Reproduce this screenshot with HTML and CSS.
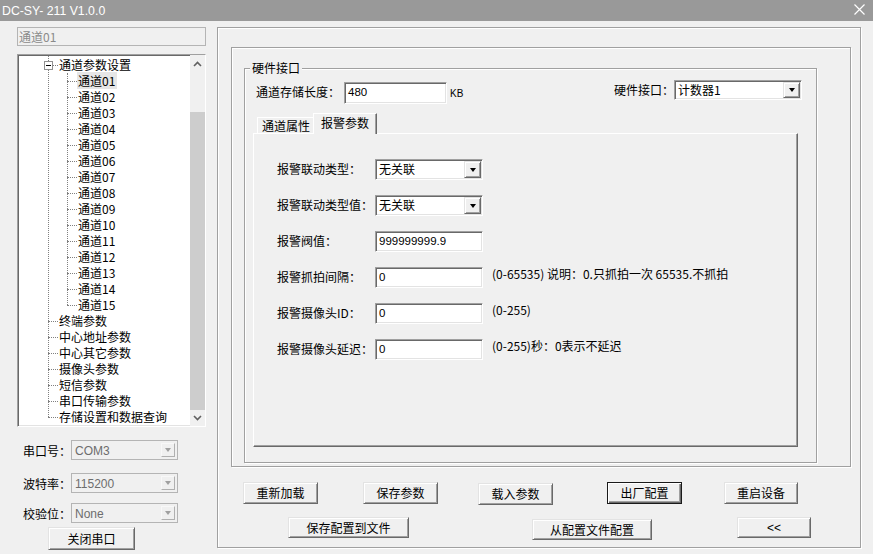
FILE: index.html
```html
<!DOCTYPE html>
<html lang="zh-CN">
<head>
<meta charset="utf-8">
<title>DC-SY- 211 V1.0.0</title>
<link rel="stylesheet" href="styles.css">
</head>
<body>
<div class="titlebar">
  <span class="title">DC-SY- 211 V1.0.0</span>
  <svg class="close" width="11" height="11" viewBox="0 0 11 11"><path d="M0.5 0.5L10.5 10.5M10.5 0.5L0.5 10.5" stroke="#fff" stroke-width="1.2" fill="none"/></svg>
</div>
<div class="main">
  <div class="left">
    <div class="chan">通道01</div>
    <div class="tree">
      <div class="tree-body">
        <ul class="l1">
          <li>
            <div class="row r1"><span class="exp"></span>通道参数设置</div>
            <ul class="l2">
              <li class="row r2"><span class="sel">通道01</span></li>
              <li class="row r2">通道02</li>
              <li class="row r2">通道03</li>
              <li class="row r2">通道04</li>
              <li class="row r2">通道05</li>
              <li class="row r2">通道06</li>
              <li class="row r2">通道07</li>
              <li class="row r2">通道08</li>
              <li class="row r2">通道09</li>
              <li class="row r2">通道10</li>
              <li class="row r2">通道11</li>
              <li class="row r2">通道12</li>
              <li class="row r2">通道13</li>
              <li class="row r2">通道14</li>
              <li class="row r2">通道15</li>
            </ul>
          </li>
          <li class="row r1">终端参数</li>
          <li class="row r1">中心地址参数</li>
          <li class="row r1">中心其它参数</li>
          <li class="row r1">摄像头参数</li>
          <li class="row r1">短信参数</li>
          <li class="row r1">串口传输参数</li>
          <li class="row r1">存储设置和数据查询</li>
        </ul>
      </div>
      <div class="vscroll">
        <div class="sb-btn up"><svg width="9" height="6" viewBox="0 0 9 6"><path d="M1 5L4.5 1.5L8 5" fill="none" stroke="#606060" stroke-width="1.6"/></svg></div>
        <div class="sb-track"><div class="sb-thumb"></div></div>
        <div class="sb-btn down"><svg width="9" height="6" viewBox="0 0 9 6"><path d="M1 1L4.5 4.5L8 1" fill="none" stroke="#606060" stroke-width="1.6"/></svg></div>
      </div>
    </div>
    <div class="serial">
      <div class="srow"><span class="slbl">串口号：</span><div class="combo dis"><span class="val">COM3</span><span class="dd"></span></div></div>
      <div class="srow"><span class="slbl">波特率：</span><div class="combo dis"><span class="val">115200</span><span class="dd"></span></div></div>
      <div class="srow"><span class="slbl">校验位：</span><div class="combo dis"><span class="val">None</span><span class="dd"></span></div></div>
      <button class="btn closeport">关闭串口</button>
    </div>
  </div>

  <div class="frameA">
    <div class="frameB">
      <div class="group">
        <span class="group-title">硬件接口</span>
        <div class="hwrow">
          <span class="hwlbl">通道存储长度：</span>
          <div class="tb len">480</div>
          <span class="kb">KB</span>
          <span class="hwlbl2">硬件接口：</span>
          <div class="combo hw"><span class="val">计数器1</span><span class="dd"></span></div>
        </div>
        <div class="tabs">
          <div class="tab">通道属性</div>
          <div class="tab active">报警参数</div>
        </div>
        <div class="tabpage">
          <div class="frow"><span class="lbl">报警联动类型：</span><div class="combo fc"><span class="val">无关联</span><span class="dd"></span></div></div>
          <div class="frow"><span class="lbl">报警联动类型值：</span><div class="combo fc"><span class="val">无关联</span><span class="dd"></span></div></div>
          <div class="frow"><span class="lbl">报警阀值：</span><div class="tb fc">999999999.9</div></div>
          <div class="frow"><span class="lbl">报警抓拍间隔：</span><div class="tb fc">0</div><span class="hint">(0-65535) 说明：0.只抓拍一次 65535.不抓拍</span></div>
          <div class="frow"><span class="lbl">报警摄像头ID：</span><div class="tb fc">0</div><span class="hint">(0-255)</span></div>
          <div class="frow"><span class="lbl">报警摄像头延迟：</span><div class="tb fc">0</div><span class="hint">(0-255)秒：0表示不延迟</span></div>
        </div>
      </div>
    </div>
    <div class="brow1">
      <button class="btn">重新加载</button>
      <button class="btn">保存参数</button>
      <button class="btn">载入参数</button>
      <button class="btn def">出厂配置</button>
      <button class="btn">重启设备</button>
    </div>
    <div class="brow2">
      <button class="btn">保存配置到文件</button>
      <button class="btn">从配置文件配置</button>
      <button class="btn">&lt;&lt;</button>
    </div>
  </div>
</div>
</body>
</html>
```
FILE: styles.css
```css
* { box-sizing: border-box; }
html, body { margin: 0; padding: 0; }
body {
  width: 873px;
  height: 554px;
  overflow: hidden;
  background: #f0f0f0;
  font-family: "Noto Sans CJK SC", "Noto Sans", sans-serif;
  font-size: 12px;
  color: #000;
}

/* title bar */
.titlebar {
  height: 21px;
  background: #999999;
  display: flex;
  align-items: center;
  justify-content: space-between;
  padding: 0 8px 0 2px;
  color: #fff;
}
.title {
  font-family: "Liberation Sans", Arial, sans-serif;
  font-size: 12.3px;
}
.close { display: block; margin-top: -3px; }

.main { display: flex; height: 533px; }

/* left column */
.left { width: 217px; flex: none; padding-left: 17px; }
.chan {
  margin-top: 6px;
  width: 189px;
  height: 19px;
  border: 1px solid #b4b4b4;
  background: #f0f0f0;
  color: #8a8a8a;
  line-height: 17px;
  padding-left: 1px;
}
.tree {
  margin-top: 8px;
  width: 189px;
  height: 373px;
  display: flex;
  background: #fff;
  border: 1px solid;
  border-color: #a0a0a0 #fff #fff #a0a0a0;
  box-shadow: inset 1px 1px #696969, inset -1px -1px #e3e3e3;
}
.tree-body { flex: 1; padding-top: 2px; position: relative; overflow: hidden; }
.l1, .l2 { list-style: none; margin: 0; padding: 0; position: relative; }
.l1::before {
  content: "";
  position: absolute;
  left: 30px;
  top: -3px;
  bottom: 8px;
  border-left: 1px dotted #808080;
}
.l2::before {
  content: "";
  position: absolute;
  left: 49px;
  top: 0;
  bottom: 8px;
  border-left: 1px dotted #808080;
}
.row {
  height: 16px;
  line-height: 16px;
  position: relative;
  white-space: nowrap;
}
.row::before {
  content: "";
  position: absolute;
  top: 8px;
  width: 10px;
  border-top: 1px dotted #808080;
}
.r1 { padding-left: 41px; }
.r1::before { left: 30px; }
.r2 { padding-left: 60px; }
.r2::before { left: 49px; }
.exp {
  position: absolute;
  left: 26px;
  top: 4px;
  width: 9px;
  height: 9px;
  border: 1px solid #919191;
  background: #fff;
  z-index: 1;
}
.exp::after {
  content: "";
  position: absolute;
  left: 1px;
  top: 3px;
  width: 5px;
  height: 1px;
  background: #000;
}
.sel { background: #e6e6e6; margin-left: -1px; padding: 0 2px 0 1px; }

.vscroll {
  width: 15px;
  flex: none;
  display: flex;
  flex-direction: column;
  background: #f0f0f0;
}
.sb-btn { height: 17px; display: flex; align-items: center; justify-content: center; }
.sb-btn svg { display: block; }
.sb-btn.down { height: 16px; }
.sb-track { flex: 1; padding-top: 40px; display: flex; flex-direction: column; }
.sb-thumb { flex: 1; background: #cdcdcd; }

.serial { padding-left: 6px; }
.srow { display: flex; align-items: center; height: 20px; margin-top: 13px; }
.srow:nth-child(3) { margin-top: 10px; }
.slbl { width: 48px; }

/* combos */
.combo {
  display: flex;
  height: 20px;
  background: #fff;
  border: 1px solid;
  border-color: #a0a0a0 #fff #fff #a0a0a0;
  box-shadow: inset 1px 1px #696969, inset -1px -1px #e3e3e3;
  padding: 1px 1px 1px 3px;
}
.combo .val { flex: 1; line-height: 16px; white-space: nowrap; }
.dd {
  width: 17px;
  flex: none;
  background: #f0f0f0;
  border: 1px solid;
  border-color: #e3e3e3 #696969 #696969 #e3e3e3;
  box-shadow: inset 1px 1px #fff, inset -1px -1px #a0a0a0;
  display: flex;
  align-items: center;
  justify-content: center;
}
.dd::after {
  content: "";
  border-left: 3.5px solid transparent;
  border-right: 3.5px solid transparent;
  border-top: 4px solid #000;
}
.combo.dis {
  width: 107px;
  background: #f0f0f0;
  color: #6d6d6d;
  border: 1px solid #b4b4b4;
  box-shadow: none;
  padding: 2px 2px 2px 3px;
  font-family: "Liberation Sans", Arial, sans-serif;
}
.combo.dis .dd { width: 14px; border-color: #f8f8f8 #b0b0b0 #b0b0b0 #f8f8f8; box-shadow: none; }
.combo.dis .dd::after { border-top-color: #a0a0a0; }

/* text boxes */
.tb {
  background: #fff;
  border: 1px solid;
  border-color: #a0a0a0 #fff #fff #a0a0a0;
  box-shadow: inset 1px 1px #696969, inset -1px -1px #e3e3e3;
  padding: 1px 0 0 3px;
  line-height: 14px;
  font-family: "Liberation Sans", Arial, sans-serif;
  font-size: 11.5px;
  white-space: nowrap;
}

/* buttons */
.btn {
  font-family: "Noto Sans CJK SC", "Noto Sans", sans-serif;
  font-size: 12px;
  color: #000;
  background: #f0f0f0;
  border: 1px solid;
  border-color: #e3e3e3 #696969 #696969 #e3e3e3;
  box-shadow: inset 1px 1px #fff, inset -1px -1px #a0a0a0;
  padding: 0;
  line-height: 18px;
}
.btn.def {
  border: 1px solid #1a1a1a;
  box-shadow: inset 1px 1px #fff, inset -1px -1px #696969, inset -2px -2px #a0a0a0;
}
.closeport { margin: 4px 0 0 25px; width: 87px; height: 23px; }

/* right frames */
.frameA {
  margin-top: 6px;
  width: 644px;
  height: 521px;
  flex: none;
  border: 1px solid #a0a0a0;
  box-shadow: inset 1px 1px #fff, 1px 1px #fff;
}
.frameB {
  margin: 19px 0 0 13px;
  width: 620px;
  height: 420px;
  border: 1px solid #a0a0a0;
  box-shadow: inset 1px 1px #fff, 1px 1px #fff;
}
.group {
  position: relative;
  margin: 20px 0 0 12px;
  width: 573px;
  height: 395px;
  border: 1px solid #a0a0a0;
  box-shadow: inset 1px 1px #fff, 1px 1px #fff;
}
.group-title {
  position: absolute;
  left: 5px;
  top: -9px;
  padding: 0 2px;
  background: #f0f0f0;
  line-height: 16px;
}
.hwrow {
  display: flex;
  align-items: flex-start;
  height: 24px;
  margin-top: 11px;
  padding: 0 14px 0 11px;
}
.hwlbl { width: 88px; line-height: 22px; margin-top: 1px; }
.tb.len { width: 103px; height: 22px; margin-top: 2px; padding-top: 2px; }
.kb {
  font-family: "Liberation Sans", Arial, sans-serif;
  font-size: 10px;
  margin: 3px 0 0 3px;
  line-height: 22px;
}
.hwlbl2 { margin-left: auto; margin-right: 0; line-height: 20px; }
.combo.hw { width: 128px; }

/* tabs */
.tabs {
  display: flex;
  align-items: flex-end;
  height: 20px;
  margin: 9px 0 0 12px;
  position: relative;
  z-index: 1;
}
.tab {
  height: 16px;
  line-height: 15px;
  padding: 0 4px;
  border: 1px solid;
  border-bottom: none;
  border-color: #fff #696969 transparent #fff;
  box-shadow: inset -1px 0 #a0a0a0;
  background: #f0f0f0;
}
.tab.active {
  height: 21px;
  margin-left: -2px;
  margin-bottom: -1px;
  padding: 0 7px;
  line-height: 18px;
}
.tabpage {
  margin-left: 8px;
  width: 545px;
  height: 314px;
  border: 1px solid;
  border-color: #fff #696969 #696969 #fff;
  box-shadow: inset -1px -1px #a0a0a0;
  padding: 25px 0 0 23px;
}
.frow {
  display: flex;
  align-items: flex-start;
  height: 21px;
  margin-bottom: 15px;
}
.lbl { width: 98px; line-height: 20px; white-space: nowrap; }
.fc { width: 108px; height: 21px; }
.tb.fc { padding-top: 2px; }
.hint { margin-left: 9px; line-height: 14px; white-space: nowrap; }

/* bottom buttons */
.brow1 {
  display: flex;
  align-items: flex-start;
  margin-top: 15px;
  padding-left: 25px;
  height: 22px;
}
.brow1 .btn { width: 75px; height: 22px; }
.brow1 .btn:nth-child(2) { margin-left: 45px; }
.brow1 .btn:nth-child(3) { margin-left: 40px; margin-top: 1px; }
.brow1 .btn:nth-child(4) { margin-left: 54px; }
.brow1 .btn:nth-child(5) { margin-left: 42px; width: 74px; }
.brow2 {
  display: flex;
  align-items: flex-start;
  margin-top: 13px;
  padding-left: 70px;
}
.brow2 .btn { height: 21px; }
.brow2 .btn:nth-child(1) { width: 121px; }
.brow2 .btn:nth-child(2) { width: 120px; margin-left: 123px; margin-top: 2px; }
.brow2 .btn:nth-child(3) { width: 74px; margin-left: 85px; font-family: "Liberation Sans", Arial, sans-serif; }
```
